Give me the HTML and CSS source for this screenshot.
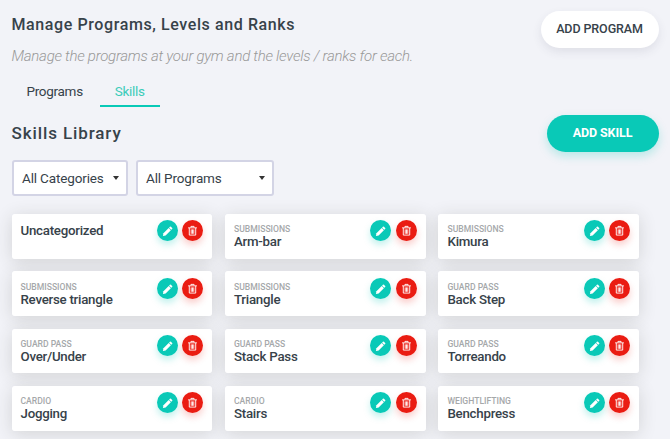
FILE: index.html
```html
<!DOCTYPE html>
<html lang="en">
  <head>
    <meta charset="utf-8" />
    <meta name="viewport" content="width=device-width, initial-scale=1.0" />
    <title>Manage Programs, Levels and Ranks</title>
    <link rel="stylesheet" href="styles.css">
  </head>
  <body>
    <!-- icons shared by all skill cards -->
    <svg class="sprite" width="0" height="0">
      <symbol id="pencil" viewBox="0 0 12 12">
        <path d="M1 11.9 L1.6 9 L7.3 3.3 L9.7 5.7 L4 11.4 Z" />
        <path d="M7.7 2.9 L8.7 1.9 Q9.2 1.5 9.7 1.9 L11.1 3.3 Q11.5 3.8 11.1 4.3 L10.1 5.3 Z" />
      </symbol>
      <symbol id="trash" viewBox="0 0 12 12">
        <path d="M4.3 2.6 V1.5 H7.7 V2.6 M1.2 3.1 H10.8 M2.5 3.3 V11 H9.5 V3.3 M4.6 4.8 V9.6 M6 4.8 V9.6 M7.4 4.8 V9.6" />
      </symbol>
    </svg>

    <div class="header">
      <div>
        <h1 class="title">Manage Programs, Levels and Ranks</h1>
        <p class="subtitle">Manage the programs at your gym and the levels / ranks for each.</p>
      </div>
      <button class="btn">ADD PROGRAM</button>
    </div>

    <div class="tabs">
      <a class="tab">Programs</a>
      <a class="tab active">Skills</a>
    </div>

    <div class="library-header">
      <h2 class="library-title">Skills Library</h2>
      <button class="btn btn-primary">ADD SKILL</button>
    </div>

    <div class="filters">
      <div class="select categories">All Categories</div>
      <div class="select programs">All Programs</div>
    </div>

    <div class="skills">
      <div class="card">
        <div class="info"><div class="name only">Uncategorized</div></div>
        <span class="icon edit"><svg><use href="#pencil" /></svg></span>
        <span class="icon delete"><svg><use href="#trash" /></svg></span>
      </div>
      <div class="card">
        <div class="info"><div class="category">SUBMISSIONS</div><div class="name">Arm-bar</div></div>
        <span class="icon edit"><svg><use href="#pencil" /></svg></span>
        <span class="icon delete"><svg><use href="#trash" /></svg></span>
      </div>
      <div class="card">
        <div class="info"><div class="category">SUBMISSIONS</div><div class="name">Kimura</div></div>
        <span class="icon edit"><svg><use href="#pencil" /></svg></span>
        <span class="icon delete"><svg><use href="#trash" /></svg></span>
      </div>
      <div class="card">
        <div class="info"><div class="category">SUBMISSIONS</div><div class="name">Reverse triangle</div></div>
        <span class="icon edit"><svg><use href="#pencil" /></svg></span>
        <span class="icon delete"><svg><use href="#trash" /></svg></span>
      </div>
      <div class="card">
        <div class="info"><div class="category">SUBMISSIONS</div><div class="name">Triangle</div></div>
        <span class="icon edit"><svg><use href="#pencil" /></svg></span>
        <span class="icon delete"><svg><use href="#trash" /></svg></span>
      </div>
      <div class="card">
        <div class="info"><div class="category">GUARD PASS</div><div class="name">Back Step</div></div>
        <span class="icon edit"><svg><use href="#pencil" /></svg></span>
        <span class="icon delete"><svg><use href="#trash" /></svg></span>
      </div>
      <div class="card">
        <div class="info"><div class="category">GUARD PASS</div><div class="name">Over/Under</div></div>
        <span class="icon edit"><svg><use href="#pencil" /></svg></span>
        <span class="icon delete"><svg><use href="#trash" /></svg></span>
      </div>
      <div class="card">
        <div class="info"><div class="category">GUARD PASS</div><div class="name">Stack Pass</div></div>
        <span class="icon edit"><svg><use href="#pencil" /></svg></span>
        <span class="icon delete"><svg><use href="#trash" /></svg></span>
      </div>
      <div class="card">
        <div class="info"><div class="category">GUARD PASS</div><div class="name">Torreando</div></div>
        <span class="icon edit"><svg><use href="#pencil" /></svg></span>
        <span class="icon delete"><svg><use href="#trash" /></svg></span>
      </div>
      <div class="card">
        <div class="info"><div class="category">CARDIO</div><div class="name">Jogging</div></div>
        <span class="icon edit"><svg><use href="#pencil" /></svg></span>
        <span class="icon delete"><svg><use href="#trash" /></svg></span>
      </div>
      <div class="card">
        <div class="info"><div class="category">CARDIO</div><div class="name">Stairs</div></div>
        <span class="icon edit"><svg><use href="#pencil" /></svg></span>
        <span class="icon delete"><svg><use href="#trash" /></svg></span>
      </div>
      <div class="card">
        <div class="info"><div class="category">WEIGHTLIFTING</div><div class="name">Benchpress</div></div>
        <span class="icon edit"><svg><use href="#pencil" /></svg></span>
        <span class="icon delete"><svg><use href="#trash" /></svg></span>
      </div>
    </div>
  </body>
</html>
```

FILE: styles.css
```css
* {
  box-sizing: border-box;
}

body {
  height: 439px;
  margin: 0;
  padding: 11px 11.5px 0;
  overflow: hidden;
  background-color: #f2f3f8;
  color: #37424a;
  font-family: Roboto, sans-serif;
}

.sprite {
  position: absolute;
}

.header {
  display: flex;
  justify-content: space-between;
  align-items: flex-start;
  height: 64px;
}

.title {
  margin: 4px 0 0;
  font-size: 16px;
  font-weight: 500;
  line-height: 20px;
  letter-spacing: 0.6px;
}

.subtitle {
  margin: 11px 0 0;
  font-size: 15px;
  font-weight: 300;
  font-style: italic;
  line-height: 20px;
  letter-spacing: -0.26px;
  color: #999;
}

.btn {
  width: 118px;
  height: 37px;
  padding: 0 0 2px;
  border: none;
  border-radius: 19px;
  background-color: #fff;
  color: #37424a;
  font-family: inherit;
  font-size: 12.5px;
  font-weight: 500;
  letter-spacing: -0.1px;
  box-shadow: 0 4px 10px rgba(60, 60, 90, 0.1);
}

.btn-primary {
  width: 112px;
  background-color: #09c9b7;
  color: #fff;
  font-weight: 700;
  box-shadow: 0 4px 10px rgba(9, 201, 183, 0.25);
}

/* Tabs */
.tabs {
  display: flex;
  gap: 2px;
  height: 32px;
}

.tab {
  padding: 6px 15px 0;
  font-size: 13.5px;
  line-height: 20px;
  letter-spacing: -0.3px;
}

.tab.active {
  color: #3cccb9;
  border-bottom: 2px solid #09c9b7;
}

.library-header {
  display: flex;
  justify-content: space-between;
  height: 53px;
  padding-top: 8px;
}

.library-title {
  margin: 7px 0 0;
  font-size: 17px;
  font-weight: 500;
  line-height: 22px;
  letter-spacing: 0.9px;
}

/* Filters */
.filters {
  display: flex;
  gap: 8px;
}

.select {
  display: flex;
  align-items: center;
  justify-content: space-between;
  height: 36px;
  padding: 0 7px 0 8.5px;
  border: 2px solid #d3d4e5;
  border-radius: 3px;
  background-color: #fff;
  font-size: 13.5px;
  letter-spacing: -0.15px;
}

.select::after {
  content: "";
  border: 3.5px solid transparent;
  border-top: 4px solid #333;
  border-bottom: none;
}

.categories {
  width: 116px;
}

.programs {
  width: 138px;
}

/* Skill cards */
.skills {
  display: grid;
  grid-template-columns: repeat(3, 1fr);
  grid-auto-rows: 44.5px;
  gap: 12.9px;
  width: 627.6px;
  margin-top: 18.05px;
  isolation: isolate;
}

.card {
  position: relative;
  display: flex;
  gap: 4.5px;
  padding: 6.1px 8.7px 0 9px;
  border-radius: 3px;
  background-color: #fff;
}

/* shadow sits behind the whole grid, so it never darkens the next card */
.card::before {
  content: "";
  position: absolute;
  inset: 0;
  z-index: -1;
  border-radius: 3px;
  box-shadow: 0 3px 18px rgba(50, 50, 40, 0.16);
}

.info {
  flex: 1;
  padding-top: 4px;
}

.category {
  font-size: 8.6px;
  font-weight: 500;
  line-height: 10px;
  color: #a5a8aa;
}

.name {
  font-size: 13.3px;
  font-weight: 500;
  line-height: 16px;
  letter-spacing: -0.26px;
}

.name.only {
  line-height: 14px;
}

.icon {
  display: flex;
  align-items: center;
  justify-content: center;
  width: 21px;
  height: 21px;
  border-radius: 50%;
}

.icon svg {
  width: 11px;
  height: 11px;
}

.edit {
  background-color: #09c9b7;
  box-shadow: 0 4px 7px rgba(9, 201, 183, 0.25);
}

.edit svg {
  fill: #fff;
}

.delete {
  background-color: #ea1c12;
  box-shadow: 0 4px 7px rgba(234, 28, 18, 0.22);
}

.delete svg {
  fill: none;
  stroke: #fff;
  stroke-width: 1;
}
```
